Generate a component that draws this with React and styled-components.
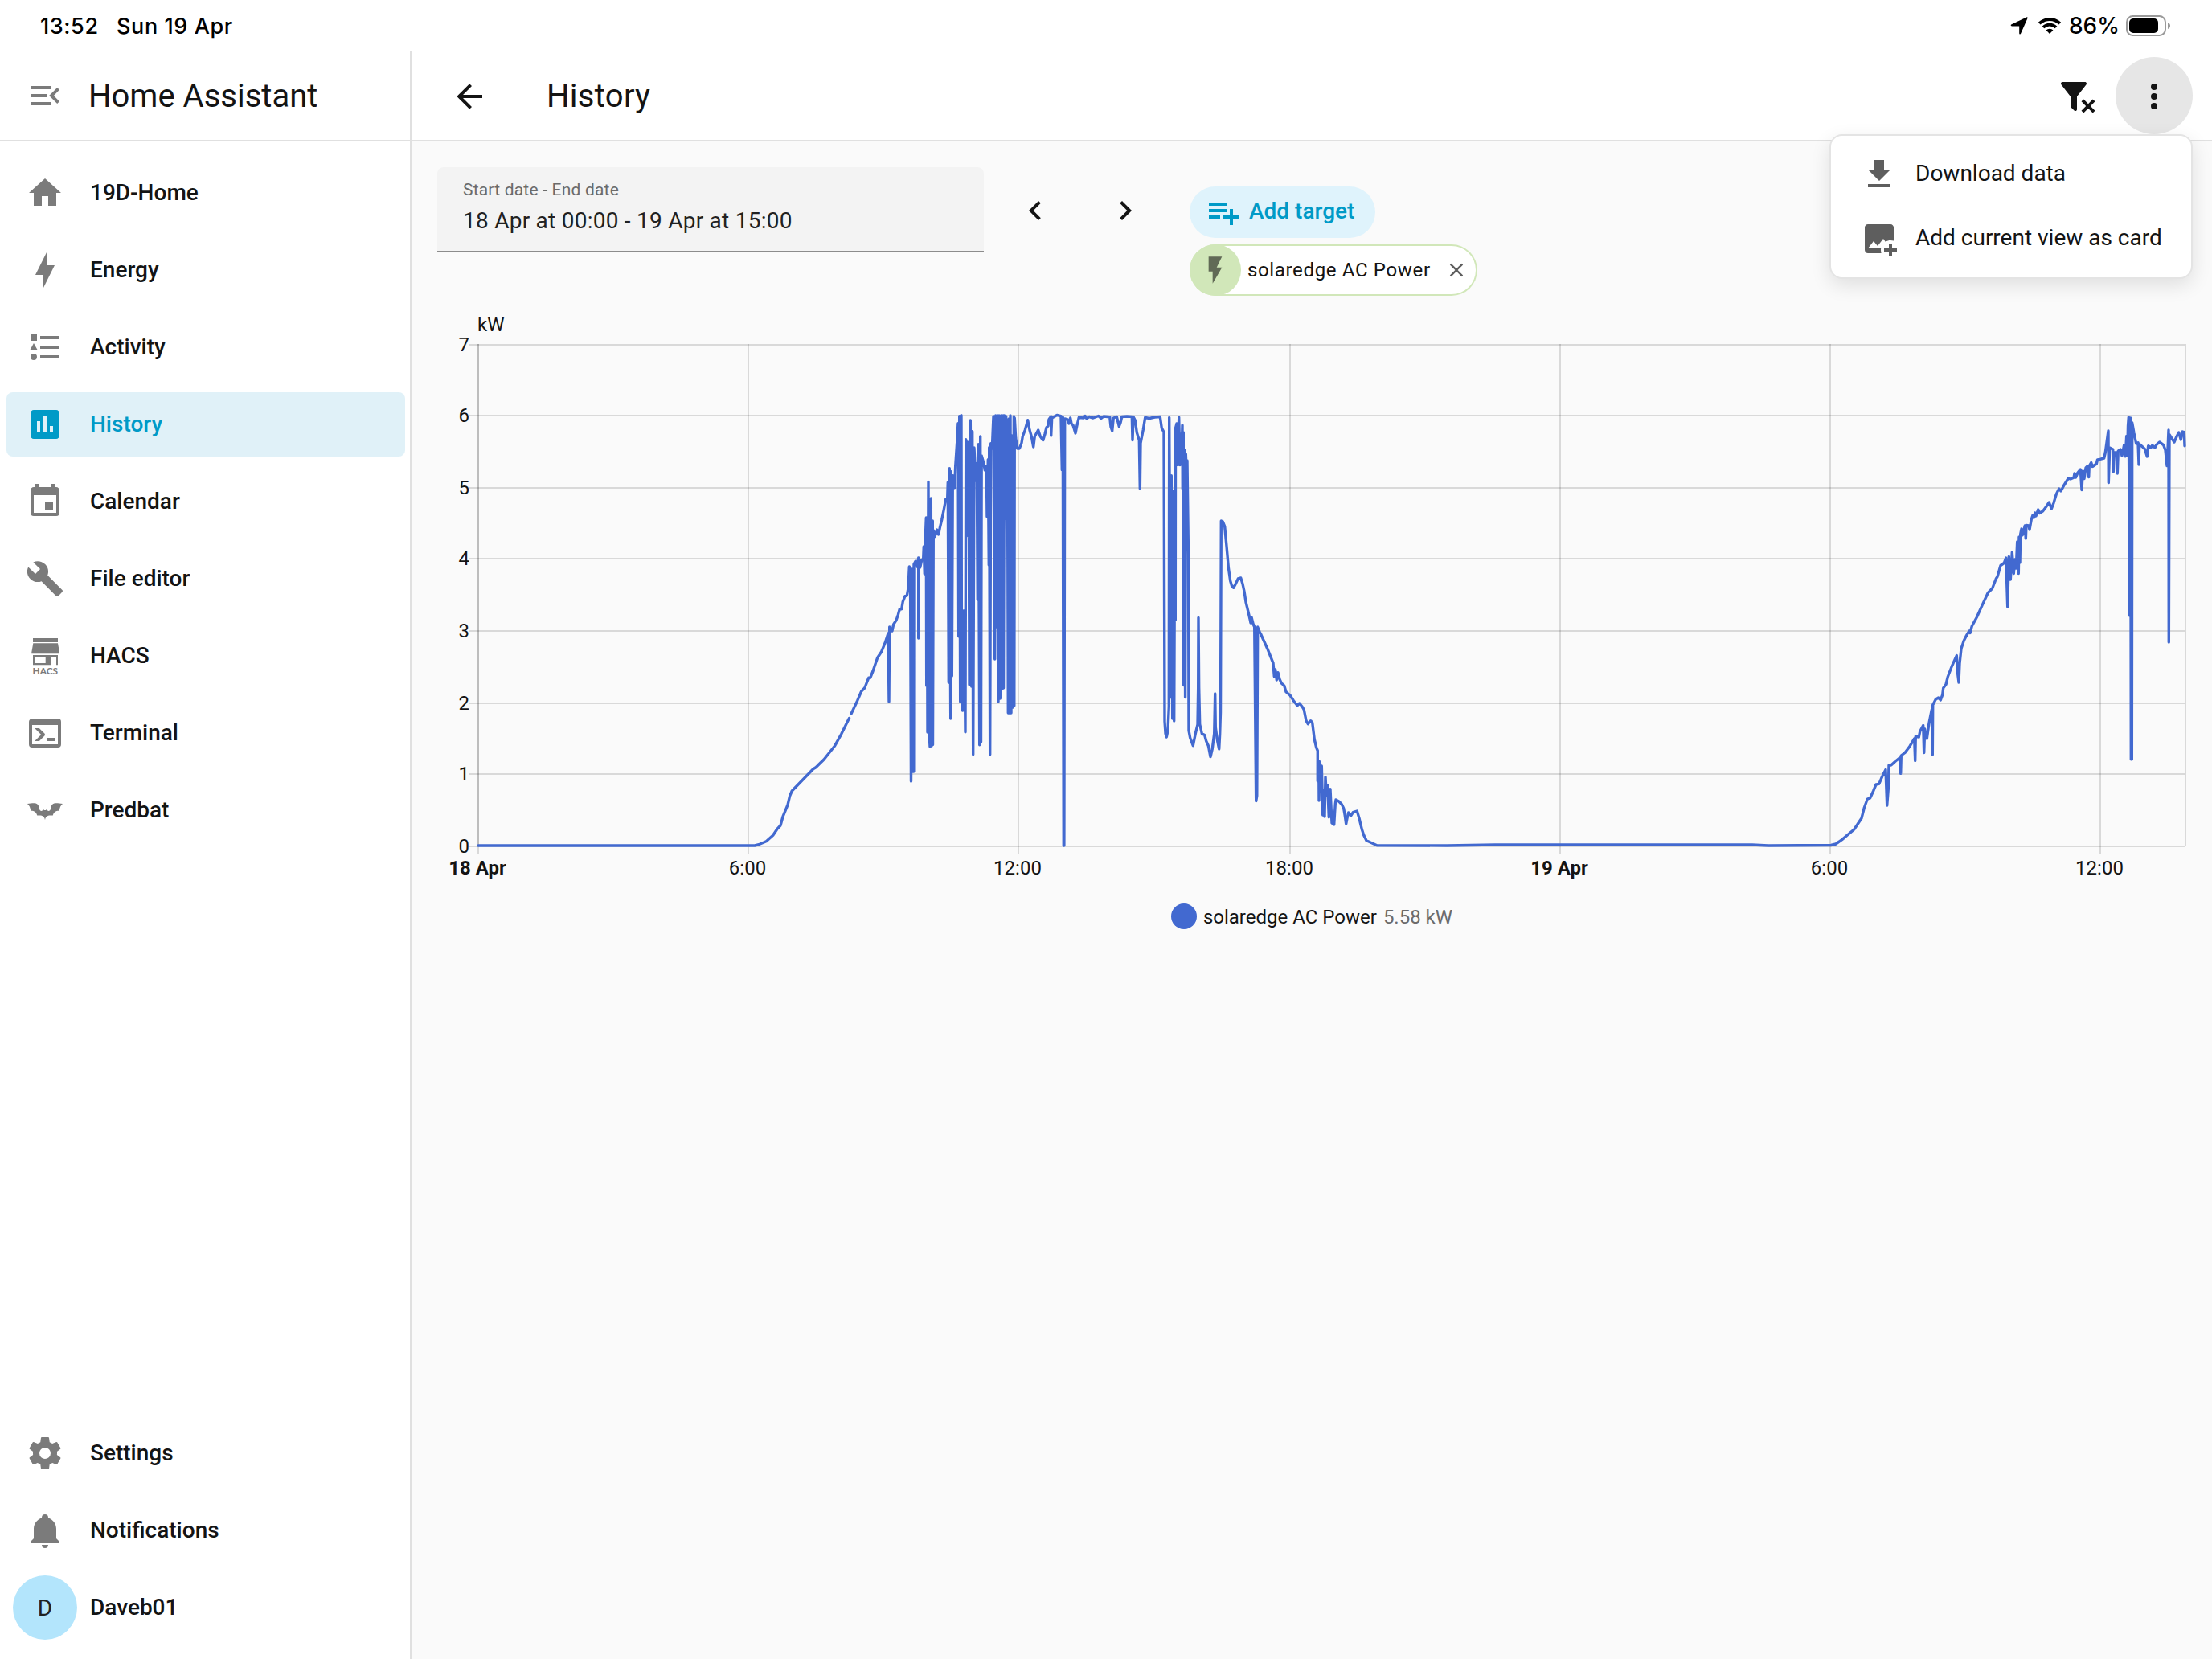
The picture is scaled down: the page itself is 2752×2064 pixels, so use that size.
import React from 'react'
import styled, { createGlobalStyle } from 'styled-components'

const GlobalStyle = createGlobalStyle`
  * { box-sizing: border-box; }
  body {
    margin: 0;
    background: #fafafa;
    font-family: Roboto, sans-serif;
    color: #141414;
  }
`

// ---------- icons (24 unit grid) ----------
const paths = {
  menuOpen: 'M21,15.61L19.59,17L14.58,12L19.59,7L21,8.39L17.44,12L21,15.61M3,6H16V8H3V6M3,13V11H13V13H3M3,18V16H16V18H3Z',
  home: 'M10,20V14H14V20H19V12H22L12,3L2,12H5V20H10Z',
  bolt: 'M11 15H6L13 1V9H18L11 23V15Z',
  list: 'M5,9.5L7.5,14H2.5L5,9.5M3,4H7V8H3V4M5,20A2,2 0 0,0 7,18A2,2 0 0,0 5,16A2,2 0 0,0 3,18A2,2 0 0,0 5,20M9,5V7H21V5H9M9,19H21V17H9V19M9,13H21V11H9V13Z',
  chart: 'M9 17H7V10H9M13 17H11V7H13M17 17H15V13H17M19 3H5C3.89 3 3 3.89 3 5V19C3 20.1 3.89 21 5 21H19C20.1 21 21 20.1 21 19V5C21 3.89 20.1 3 19 3Z',
  calendar: 'M19,19H5V8H19M16,1V3H8V1H6V3H5C3.89,3 3,3.89 3,5V19A2,2 0 0,0 5,21H19A2,2 0 0,0 21,19V5C21,3.89 20.1,3 19,3H18V1M17,12H12V17H17V12Z',
  wrench: 'M22.7,19L13.6,9.9C14.5,7.6 14,4.9 12.1,3C10.1,1 7.1,0.6 4.7,1.7L9,6L6,9L1.6,4.7C0.4,7.1 0.9,10.1 2.9,12.1C4.8,14 7.5,14.5 9.8,13.6L18.9,22.7C19.3,23.1 19.9,23.1 20.3,22.7L22.6,20.4C23.1,20 23.1,19.3 22.7,19Z',
  console: 'M20,19V7H4V19H20M20,3A2,2 0 0,1 22,5V19A2,2 0 0,1 20,21H4A2,2 0 0,1 2,19V5C2,3.89 2.9,3 4,3H20M13,17V15H18V17H13M9.58,13L5.57,9H8.4L11.7,12.3C12.09,12.69 12.09,13.33 11.7,13.72L8.42,17H5.59L9.58,13Z',
  bat: 'M1,8C3,7.6 4.6,7.5 5.9,7.6C7.8,8 8.2,9.3 8.5,11.2C8.7,12.2 9.5,12.8 10.4,12.3L10.8,11.2L11.5,12H12.5L13.2,11.2L13.6,12.3C14.5,12.8 15.3,12.2 15.5,11.2C15.8,9.3 16.2,8 18.1,7.6C19.4,7.5 21,7.6 23,8C21.6,9 21.2,10.6 20.8,12.4C18.9,12.3 17.3,13.3 16.9,15.3C15.2,15.1 13.8,15.2 13.1,15.8C12.5,16.3 12.2,17 12,18.1C11.8,17 11.5,16.3 10.9,15.8C10.2,15.2 8.8,15.1 7.1,15.3C6.7,13.3 5.1,12.3 3.2,12.4C2.8,10.6 2.4,9 1,8Z',
  cog: 'M12,15.5A3.5,3.5 0 0,1 8.5,12A3.5,3.5 0 0,1 12,8.5A3.5,3.5 0 0,1 15.5,12A3.5,3.5 0 0,1 12,15.5M19.43,12.97C19.47,12.65 19.5,12.33 19.5,12C19.5,11.67 19.47,11.34 19.43,11L21.54,9.37C21.73,9.22 21.78,8.95 21.66,8.73L19.66,5.27C19.54,5.05 19.27,4.96 19.05,5.05L16.56,6.05C16.04,5.66 15.5,5.32 14.87,5.07L14.5,2.42C14.46,2.18 14.25,2 14,2H10C9.75,2 9.54,2.18 9.5,2.42L9.13,5.07C8.5,5.32 7.96,5.66 7.44,6.05L4.95,5.05C4.73,4.96 4.46,5.05 4.34,5.27L2.34,8.73C2.21,8.95 2.27,9.22 2.46,9.37L4.57,11C4.53,11.34 4.5,11.67 4.5,12C4.5,12.33 4.53,12.65 4.57,12.97L2.46,14.63C2.27,14.78 2.21,15.05 2.34,15.27L4.34,18.73C4.46,18.95 4.73,19.03 4.95,18.95L7.44,17.94C7.96,18.34 8.5,18.68 9.13,18.93L9.5,21.58C9.54,21.82 9.75,22 10,22H14C14.25,22 14.46,21.82 14.5,21.58L14.87,18.93C15.5,18.67 16.04,18.34 16.56,17.94L19.05,18.95C19.27,19.03 19.54,18.95 19.66,18.73L21.66,15.27C21.78,15.05 21.73,14.78 21.54,14.63L19.43,12.97Z',
  bell: 'M21,19V20H3V19L5,17V11C5,7.9 7.03,5.17 10,4.29C10,4.19 10,4.1 10,4A2,2 0 0,1 12,2A2,2 0 0,1 14,4C14,4.1 14,4.19 14,4.29C16.97,5.17 19,7.9 19,11V17L21,19M14,21A2,2 0 0,1 12,23A2,2 0 0,1 10,21',
  arrowLeft: 'M20,11V13H8L13.5,18.5L12.08,19.92L4.16,12L12.08,4.08L13.5,5.5L8,11H20Z',
  chevronLeft: 'M15.41,16.58L10.83,12L15.41,7.41L14,6L8,12L14,18L15.41,16.58Z',
  chevronRight: 'M8.59,16.58L13.17,12L8.59,7.41L10,6L16,12L10,18L8.59,16.58Z',
  playlistPlus: 'M3 16H10V14H3M18 14V10H16V14H12V16H16V20H18V16H22V14M14 6H3V8H14M14 10H3V12H14V10Z',
  flash: 'M7,2V13H10V22L17,10H13L17,2H7Z',
  close: 'M19,6.41L17.59,5L12,10.59L6.41,5L5,6.41L10.59,12L5,17.59L6.41,19L12,13.41L17.59,19L19,17.59L13.41,12L19,6.41Z',
  filterRemove: 'M14.76,20.83L17.6,18L14.76,15.17L16.17,13.76L19,16.57L21.83,13.76L23.24,15.17L20.43,18L23.24,20.83L21.83,22.24L19,19.4L16.17,22.24L14.76,20.83M12,19.88C12.04,20.18 11.94,20.5 11.71,20.71C11.32,21.1 10.69,21.1 10.3,20.71L8.29,18.7C8.06,18.47 7.96,18.16 8,17.87V12H7.97L2.21,4.62C1.87,4.19 1.95,3.56 2.38,3.22C2.57,3.08 2.78,3 3,3H17C17.22,3 17.43,3.08 17.62,3.22C18.05,3.56 18.13,4.19 17.79,4.62L12.03,12H12V19.88Z',
  dots: 'M12,16A2,2 0 0,1 14,18A2,2 0 0,1 12,20A2,2 0 0,1 10,18A2,2 0 0,1 12,16M12,10A2,2 0 0,1 14,12A2,2 0 0,1 12,14A2,2 0 0,1 10,12A2,2 0 0,1 12,10M12,4A2,2 0 0,1 14,6A2,2 0 0,1 12,8A2,2 0 0,1 10,6A2,2 0 0,1 12,4Z',
  download: 'M5,20H19V18H5M19,9H15V3H9V9H5L12,16L19,9Z',
  imagePlus: 'M18 15V18H15V20H18V23H20V20H23V18H20V15H18M13.3 21H5C3.9 21 3 20.1 3 19V5C3 3.9 3.9 3 5 3H19C20.1 3 21 3.9 21 5V13.3C20.4 13.1 19.7 13 19 13C17.9 13 16.8 13.3 15.9 13.9L14.5 12L11 16.5L8.5 13.5L5 18H13.1C13 18.3 13 18.7 13 19C13 19.7 13.1 20.4 13.3 21Z',
}

const Svg = styled.svg`
  display: block;
  flex: none;
  width: ${p => p.$size || 48}px;
  height: ${p => p.$size || 48}px;
  fill: currentColor;
`

const Icon = ({ name, size }) => (
  <Svg $size={size} viewBox="0 0 24 24">
    <path fillRule="evenodd" d={paths[name]} />
  </Svg>
)

const HacsIcon = () => (
  <Svg viewBox="0 0 48 48">
    <path d="M9 2H40V7H9ZM9.3 8.2H40L42 19.5V21.3H7.3V19.5Z" />
    <path fillRule="evenodd" d="M9 23H40V35.3H38V25.5H31V35.3H9ZM12 25.3V33H24.7V25.3Z" />
    <text x="8.6" y="47" fontSize="11.5" fontWeight="700" fontFamily="Lato, sans-serif" textLength="31.5" lengthAdjust="spacingAndGlyphs">HACS</text>
  </Svg>
)

// ---------- status bar ----------
const StatusBar = styled.div`
  height: 64px;
  padding: 0 51px 0 50px;
  display: flex;
  align-items: center;
  background: #fff;
  color: #000;
  font-family: Inter, sans-serif;
  font-size: 27px;
  font-weight: 500;
`
const Clock = styled.span`
  width: 95px;
  letter-spacing: 0.6px;
`
const Today = styled.span`
  flex: 1;
  letter-spacing: 0.6px;
`
const StatusIcons = styled.div`
  display: flex;
  align-items: center;
`
const Percent = styled.span`
  margin: 0 9px 0 9px;
  width: 62px;
  font-size: 28px;
`
const WifiIcon = styled.svg`
  margin-left: 12px;
`

// ---------- sidebar ----------
const Body = styled.div`
  display: flex;
  height: 2000px;
`
const Sidebar = styled.aside`
  width: 512px;
  flex: none;
  display: flex;
  flex-direction: column;
  background: #fff;
  border-right: 2px solid #e0e0e0;
`
const SideHeader = styled.div`
  height: 112px;
  padding-left: 32px;
  display: flex;
  align-items: center;
  gap: 30px;
  border-bottom: 2px solid #e0e0e0;
  font-size: 40px;
  color: #7b7b7b;
`
const SideTitle = styled.span`
  color: #141414;
`
const Nav = styled.nav`
  display: flex;
  flex-direction: column;
  gap: 16px;
  padding: 24px 6px 24px 8px;
  flex: ${p => (p.$grow ? 1 : 'none')};
`
const NavItem = styled.a`
  height: 80px;
  display: flex;
  align-items: center;
  gap: 32px;
  padding-left: ${p => (p.$user ? 8 : 24)}px;
  border-radius: 8px;
  background: ${p => (p.$active ? '#e0f1f8' : 'transparent')};
  color: ${p => (p.$active ? '#009ac7' : '#7b7b7b')};
`
const NavText = styled.span`
  padding-bottom: 2px;
  font-size: 28px;
  font-weight: 500;
  color: ${p => (p.$active ? '#009ac7' : '#141414')};
`
const Avatar = styled.div`
  width: 80px;
  height: 80px;
  margin-right: -16px;
  border-radius: 50%;
  background: #b3e5fc;
  color: #212121;
  display: flex;
  align-items: center;
  justify-content: center;
  font-size: 28px;
`

// ---------- main ----------
const Main = styled.main`
  flex: 1;
  min-width: 0;
  background: #fafafa;
`
const Toolbar = styled.header`
  height: 112px;
  display: flex;
  align-items: center;
  padding: 2px 24px 0 48px;
  background: #fff;
  border-bottom: 2px solid #e0e0e0;
`
const Title = styled.h1`
  flex: 1;
  margin: 0 0 1px 72px;
  font-size: 40px;
  font-weight: 400;
  letter-spacing: 0.3px;
`
const MenuAnchor = styled.div`
  position: relative;
  margin-left: 24px;
`
const RoundButton = styled.div`
  width: 96px;
  height: 96px;
  margin-top: -2px;
  padding-top: 2px;
  display: flex;
  align-items: center;
  justify-content: center;
  border-radius: 50%;
  background: ${p => (p.$pressed ? '#e6e6e6' : 'transparent')};
`
const Menu = styled.div`
  position: absolute;
  top: 94px;
  right: 0;
  z-index: 2;
  width: 452px;
  padding: 8px 0;
  border: 2px solid #e4e4e4;
  border-radius: 16px;
  background: #fff;
  box-shadow: 0 8px 24px rgba(0, 0, 0, 0.11);
`
const MenuItem = styled.div`
  height: 80px;
  padding-left: 36px;
  display: flex;
  align-items: center;
  gap: 21px;
  color: #5e5e5e;
`
const MenuText = styled.span`
  font-size: 28px;
  margin-bottom: 4px;
  color: #141414;
`
const Filters = styled.section`
  display: flex;
  align-items: flex-start;
  padding: 32px 32px 0;
`
const DateField = styled.div`
  width: 680px;
  height: 106px;
  padding: 13px 32px 0;
  background: #f3f3f3;
  border-bottom: 2px solid #8c8c8c;
  border-radius: 8px 8px 0 0;
`
const FieldLabel = styled.div`
  font-size: 21px;
  line-height: 30px;
  letter-spacing: 0.2px;
  color: #6b6b6b;
`
const FieldValue = styled.div`
  font-size: 28px;
  line-height: 48px;
  letter-spacing: 0.25px;
  color: #212121;
`
const Steps = styled.div`
  display: flex;
  gap: 16px;
  padding: 7px 0 0 16px;
  margin-right: 32px;
`
const Targets = styled.div`
  display: flex;
  flex-direction: column;
  align-items: flex-start;
  gap: 8px;
  padding-top: 24px;
`
const AddTarget = styled.div`
  height: 64px;
  width: 231px;
  padding-left: 18px;
  display: flex;
  align-items: center;
  gap: 8px;
  border-radius: 32px;
  background: #dff3fc;
  color: #009ac7;
  font-size: 28px;
  font-weight: 500;
`
const AddTargetText = styled.span`
  padding-bottom: 3px;
`
const Chip = styled.div`
  height: 64px;
  width: 358px;
  display: flex;
  align-items: center;
  border-radius: 32px;
  background: #fff;
  box-shadow: inset 0 0 0 2px #d1e7b9;
  font-size: 24px;
  letter-spacing: 0.65px;
`
const ChipIcon = styled.div`
  width: 64px;
  height: 64px;
  border-radius: 50%;
  background: #d1e7b9;
  color: #616a56;
  display: flex;
  align-items: center;
  justify-content: center;
`
const ChipText = styled.span`
  flex: 1;
  margin-left: 8px;
`
const ChipClose = styled.span`
  margin-right: 12px;
  color: #5e5e5e;
`

// ---------- chart ----------
const Chart = styled.svg`
  display: block;
  width: 2240px;
  height: 732px;
  font-size: 24px;
  fill: #141414;
`
const Trace = styled.polyline`
  fill: none;
  stroke: #4269d0;
  stroke-width: 3.4px;
  stroke-linejoin: round;
  stroke-linecap: round;
`
const Legend = styled.div`
  display: flex;
  align-items: center;
  justify-content: center;
  gap: 8px;
  height: 32px;
  margin-top: 24px;
  font-size: 24px;
`
const LegendDot = styled.span`
  width: 32px;
  height: 32px;
  border-radius: 50%;
  background: #4269d0;
`
const LegendText = styled.span`
  padding-top: 1px;
  color: ${p => (p.$muted ? '#6b6b6b' : '#141414')};
`

const yTicks = [429, 517, 607, 695, 785, 875, 963, 1053]
const xTicks = [
  { x: 595, label: '18 Apr', bold: true },
  { x: 931, label: '6:00' },
  { x: 1267, label: '12:00' },
  { x: 1605, label: '18:00' },
  { x: 1941, label: '19 Apr', bold: true },
  { x: 2277, label: '6:00' },
  { x: 2613, label: '12:00' },
]

// the sensor was unavailable for a moment, so the line comes in two parts
const morning = '595,1052 939,1052 945,1050.3 953.3,1046.7 961.7,1039.3 966.7,1031.7 971,1027 974,1016 980,1001.3 982.7,990 985.3,984 996.7,972.3 1011.7,956.7 1015,954.7 1025,945 1038.3,928.3 1046.7,913.3 1056.5,893.5'

const rest = [
  '1059,888 1066.7,871.7 1071.7,860 1075.7,856 1080.7,843.3 1082.7,843.3 1086,835 1091.7,818.3 1096.7,810.7 1101.7,798.3 1105,788 1106,873 1106.7,780 1110,785 1111.7,776.7 1115,771.7 1117.3,765 1119.3,757.7 1121.7,757.7 1123.3,748.3 1126,741.7 1128.3,741 1130,731.7',
  '1131.3,705 1132.5,708 1133.5,972 1134.5,708 1135.5,960 1136.2,708 1136.8,960 1137,702 1139,698.3 1140.7,705 1142.7,694 1142.7,794 1143.3,695 1144.7,706 1146.7,697 1148.7,695 1149.3,680 1150.3,714 1151,676.7 1152.3,644 1152.7,853 1153.5,700 1154,911 1155,599.5 1156,912 1157,929 1158.3,620 1159,928 1160.3,648 1160.5,926.5 1161.3,660',
  '1163,667.7 1165.7,659 1167.7,665 1169.3,656.7 1171.7,646.7 1174.3,634 1176.7,621 1178.7,620 1179.3,600 1180.3,849 1181.3,582.7 1182.7,894 1183.3,586.7 1184.3,841 1185.3,591.7 1187.7,606.7 1188.7,580 1190.7,550 1192,526.7 1192.7,791.7 1193.7,517.7 1194.7,873 1196,516.7 1196.5,873 1197.7,884 1198.7,760 1199.6,760 1201,910.7 1201.7,546.7 1202.7,595 1203.7,550 1204.7,667 1205.3,555',
  '1206,851.7 1207.3,523 1208.7,854 1209.7,536.7 1210.7,938.7 1212,557 1214,598 1215.3,576.7 1216.3,746 1217.3,552.7 1218.7,926.7 1219.7,543 1220.5,923 1221.2,567 1224,576.7 1225.3,585 1227.3,580 1228,642.7 1229.3,571.7 1230.3,703 1230.7,556.7 1231.7,938.7 1232.7,551.7 1234.3,558 1236,518 1237.7,820 1238.7,517 1240,780 1241,517 1242,873 1243,517 1244.3,869 1245.7,517 1247,856.7 1248,517 1248.5,856 1249.5,517',
  '1251,645 1251.7,518 1252.7,664 1253.3,522 1254.3,887 1255.3,521 1256.3,887 1257,517 1258,887 1259,542 1260.3,880 1261.4,518 1261.8,878 1262.3,520 1263.7,545 1265.7,558 1268.3,558 1271,551 1272.3,543 1275.3,535 1278.7,522.7 1281,535 1283.3,543 1285.7,556 1287.3,543 1291.7,535 1294.3,543 1297.7,547.7 1300,540 1302,531.7 1304,530 1305,521.7 1307.7,518 1307.7,542 1308.7,520 1315,516.5 1320,517.6 1321.3,584.6 1322.3,519 1323.3,1052 1323.9,1052 1324.7,521',
  '1328.3,522 1330,527 1331.7,520 1333,527 1335,529 1338,539 1340,529 1342.3,519.5 1348.3,520 1350,517.5 1352,521 1355,518.5 1360,520 1366.7,517.5 1370,520.5 1373,518 1380.7,518.7 1382,531 1383.7,536 1385.3,520 1389.3,518.5 1392.3,530.5 1394,526 1395.7,518.5 1402,518 1408.3,518.5 1409,547.5 1410,518.5 1412.3,523 1414.3,538 1417.3,547.7 1418.3,608 1419,551.5 1422.3,534.5 1424.7,519.5 1430,520.5 1436.7,519 1443.3,518.5 1445.3,532.7 1448,537.5',
  '1449,897.5 1450,912.5 1451.3,917 1453,909 1454.3,879 1454.7,519.5 1456.3,867.5 1457.3,591.7 1458.7,894 1459.7,611 1460.7,897 1461.7,611 1462.3,771.5 1462.5,532.7 1464,527 1465.3,578.5 1466.7,519 1468,578.5 1468.8,540 1469.7,577 1471,529 1471.3,608 1472.3,538 1472.7,852.5 1473.6,560 1474.6,867.5 1475.3,564.7 1476.5,600 1477,573 1478.5,690 1479,909',
  '1480.7,918 1484.3,927.7 1487.3,912.7 1490,901.4 1490.7,856 1491,768.5 1491.7,856 1492.7,901 1495.3,912.7 1498.7,914.5 1500.7,922 1503.3,927.7 1506,941.6 1508.3,931.5 1510.7,912.7 1511.7,863 1512.3,905 1514.3,920 1516.7,932 1517.7,912.7 1518.5,886 1519.3,648 1521.3,649 1523.7,655 1526,679.5 1528.3,705.7 1530.7,722.7 1532.7,729.4 1534.7,731.3 1537.3,726.4 1540.3,720 1543.7,719 1546,726.5 1548,735.8 1550,749 1552.7,760 1555,770 1556,775 1557,768 1559,776 1560.7,780',
  '1562.7,996.6 1563.8,990 1564.7,780 1567.3,786.6 1568.3,788.3 1576.7,806.7 1584,825 1585.3,841.7 1586.7,833 1588.3,846 1590,836.7 1592,845 1594.3,850 1597.7,853 1600,860.7 1605,865 1609.3,871.7 1614,877.7 1616.7,875 1620,879 1622.3,883 1625,896.7 1627.3,900.7 1630.7,896.7 1632.7,899 1635.3,920 1637.7,930 1639.3,934 1639.3,971.7 1640.7,947 1641,996 1642.3,948 1643.2,970 1644.3,953 1645.7,1014 1647,983 1648,1016 1649,966.7 1650.3,990 1651.7,976.7 1653.3,1016.7 1655,981.7 1657,1024 1659.7,1026',
  '1661.3,1000 1662,995 1665.7,997 1669.3,1000.7 1671.7,1005.7 1673.3,1015 1674.7,1025 1676,1018 1677.7,1011 1680.7,1014.7 1683.3,1010.7 1688.3,1009 1691,1018 1694.3,1031.7 1696.7,1039 1700,1045.7 1705,1048 1713,1051.7 1800,1052 1860,1051 2180,1051 2200,1052 2278,1051.5',
  '2284,1050 2291.7,1044.6 2298.3,1039 2306.7,1032 2316,1018 2319.3,1005 2323.3,994 2326.7,992.8 2330.7,984 2334,976 2337.7,975.4 2341.7,966 2346,957.6 2347.7,1002 2349.3,981.7 2350,952 2352.7,952 2358.3,947 2363.3,943 2364.7,962.4 2365.3,940 2370,936.5 2376,928.4 2381.7,919 2382.7,946.5 2383.3,916 2387.3,917 2388.7,910 2392.7,902.5 2393.7,936.5 2394.7,907 2397.3,919 2400,899.5 2403.3,883 2404.3,939 2404.7,877 2408.3,870 2411.7,868 2414.3,871 2416.7,864.4 2417.7,856 2421,851.5 2423.3,842 2428.3,829 2434.3,815.6 2435.7,838.5 2437,849 2438,825.6 2440,807',
  '2443.3,797 2446.7,790.4 2450,785 2451,787.5 2453.3,779 2459.3,768 2466.7,751.6 2473.3,737.5 2478.7,732 2483.3,720 2485,717.5 2489,703.5 2493.3,700.5 2495.7,694 2497.7,755 2499.3,692.4 2501.3,721 2503.3,687 2505.3,713.5 2506.7,696 2508.3,707 2509.7,674 2511.3,713.5 2512,668 2513,700 2513.7,664.6 2515,658 2516.3,665.7 2519.3,654 2520.3,670 2521,653.5 2524,654 2525,659 2527.3,646 2529,641 2530.5,644 2531.7,638 2533,642 2535.7,634 2537.5,638.5 2541.7,635.8',
  '2546,630 2549.3,625 2552.3,633 2555,625.8 2558.3,614.7 2561.7,608 2564,611 2567.7,604 2573.3,595 2576,596 2580,594.3 2581,589 2582.5,594 2585,588 2588.3,584 2590,609.5 2591.3,586 2593,595.5 2595,582 2597,580 2598.7,593.6 2599.3,579.5 2601.7,575.5 2603.3,580.5 2608.3,577 2609.5,572 2612.7,571.4 2617.7,570 2619.3,563 2623,536 2623.3,600.6 2624.7,557 2628.7,559 2629.3,587 2630.3,563 2633.3,563 2634.3,589 2635.3,561 2638,559 2640,567 2642.7,553.6 2644.3,567.7 2645.7,542.5 2646.7,566.6 2647.5,530 2648.3,519 2649.7,766 2650.7,520',
  '2651.3,944.7 2652.3,944.7 2652.7,526 2655,539 2657.7,552 2660,550.7 2661,578 2661.7,552.5 2665.7,556 2668.3,558.5 2671.3,568 2672.7,554.7 2676,557 2677.7,554 2681,557 2682.7,553.5 2686.7,550 2691.7,553.6 2694,560 2696,579.5 2697.3,552 2698,535 2698.3,799 2699,540.7 2701.7,545 2705,550 2708.3,542.5 2710.7,538 2713.3,547 2715.3,537 2717.3,537.7 2718,554.7',
].join(' ')

function HistoryChart() {
  return (
    <Chart viewBox="512 368 2240 732">
      <g fill="#000" fillOpacity="0.13">
        {yTicks.map(y => <rect key={y} x="584" y={y - 1} width={2134} height="2" />)}
        {xTicks.map(t => <rect key={t.x} x={t.x - 1} y="428" width="2" height="634" />)}
        <rect x="2718" y="428" width="2" height="624" />
        <rect x="594" y="428" width="2" height="624" />
      </g>
      <text x="594" y="412">kW</text>
      {yTicks.map((y, i) => <text key={y} x="584" y={y + 7.5} textAnchor="end">{7 - i}</text>)}
      {xTicks.map(t => (
        <text key={t.x} x={t.x - 1} y="1088" textAnchor="middle" fontWeight={t.bold ? 700 : 400}>{t.label}</text>
      ))}
      <Trace points={morning} />
      <Trace points={rest} />
    </Chart>
  )
}

const mainLinks = [
  ['19D-Home', 'home'],
  ['Energy', 'bolt'],
  ['Activity', 'list'],
  ['History', 'chart'],
  ['Calendar', 'calendar'],
  ['File editor', 'wrench'],
  ['HACS', 'hacs'],
  ['Terminal', 'console'],
  ['Predbat', 'bat'],
]

function App() {
  const active = 'History'
  return (
    <>
      <GlobalStyle />
      <StatusBar>
        <Clock>13:52</Clock>
        <Today>Sun 19 Apr</Today>
        <StatusIcons>
          <svg width="22" height="22" viewBox="0 0 22 22"><path d="M20.2 0.4 C21.3 -0.1 21.9 0.6 21.5 1.7 L13.2 20.6 C12.6 21.9 11.2 21.6 11.2 20.2 V11.4 H2 C0.5 11.4 0.2 9.8 1.6 9.2Z" /></svg>
          <WifiIcon width="30" height="22" viewBox="0 0 30 22">
            <path d="M2.2 8.2 A18.3 18.3 0 0 1 27.8 8.2 M7 13 A11.4 11.4 0 0 1 23 13" fill="none" stroke="#000" strokeWidth="3.8" />
            <path d="M10.6 16.6 A6.3 6.3 0 0 1 19.4 16.6 L15 21Z" />
          </WifiIcon>
          <Percent>86%</Percent>
          <svg width="56" height="26" viewBox="0 0 56 26">
            <rect x="1" y="1" width="48" height="24" rx="7.5" fill="none" stroke="#9a9a9a" strokeWidth="2" />
            <rect x="4" y="4" width="36" height="18" rx="5" />
            <path d="M52 9 C54.2 9.8 55 11.3 55 13 C55 14.7 54.2 16.2 52 17Z" fill="#9a9a9a" />
          </svg>
        </StatusIcons>
      </StatusBar>
      <Body>
        <Sidebar>
          <SideHeader>
            <Icon name="menuOpen" />
            <SideTitle>Home Assistant</SideTitle>
          </SideHeader>
          <Nav $grow>
            {mainLinks.map(([label, icon]) => (
              <NavItem key={label} $active={label === active}>
                {icon === 'hacs' ? <HacsIcon /> : <Icon name={icon} />}
                <NavText $active={label === active}>{label}</NavText>
              </NavItem>
            ))}
          </Nav>
          <Nav>
            <NavItem><Icon name="cog" /><NavText>Settings</NavText></NavItem>
            <NavItem><Icon name="bell" /><NavText>Notifications</NavText></NavItem>
            <NavItem $user><Avatar>D</Avatar><NavText>Daveb01</NavText></NavItem>
          </Nav>
        </Sidebar>
        <Main>
          <Toolbar>
            <Icon name="arrowLeft" />
            <Title>History</Title>
            <Icon name="filterRemove" />
            <MenuAnchor>
              <RoundButton $pressed><Icon name="dots" /></RoundButton>
              <Menu>
                <MenuItem><Icon name="download" /><MenuText>Download data</MenuText></MenuItem>
                <MenuItem><Icon name="imagePlus" /><MenuText>Add current view as card</MenuText></MenuItem>
              </Menu>
            </MenuAnchor>
          </Toolbar>
          <Filters>
            <DateField>
              <FieldLabel>Start date - End date</FieldLabel>
              <FieldValue>18 Apr at 00:00 - 19 Apr at 15:00</FieldValue>
            </DateField>
            <Steps>
              <RoundButton><Icon name="chevronLeft" /></RoundButton>
              <RoundButton><Icon name="chevronRight" /></RoundButton>
            </Steps>
            <Targets>
              <AddTarget>
                <Icon name="playlistPlus" />
                <AddTargetText>Add target</AddTargetText>
              </AddTarget>
              <Chip>
                <ChipIcon><Icon name="flash" size={40} /></ChipIcon>
                <ChipText>solaredge AC Power</ChipText>
                <ChipClose><Icon name="close" size={28} /></ChipClose>
              </Chip>
            </Targets>
          </Filters>
          <HistoryChart />
          <Legend>
            <LegendDot />
            <LegendText>solaredge AC Power</LegendText>
            <LegendText $muted>5.58 kW</LegendText>
          </Legend>
        </Main>
      </Body>
    </>
  )
}

export default App
